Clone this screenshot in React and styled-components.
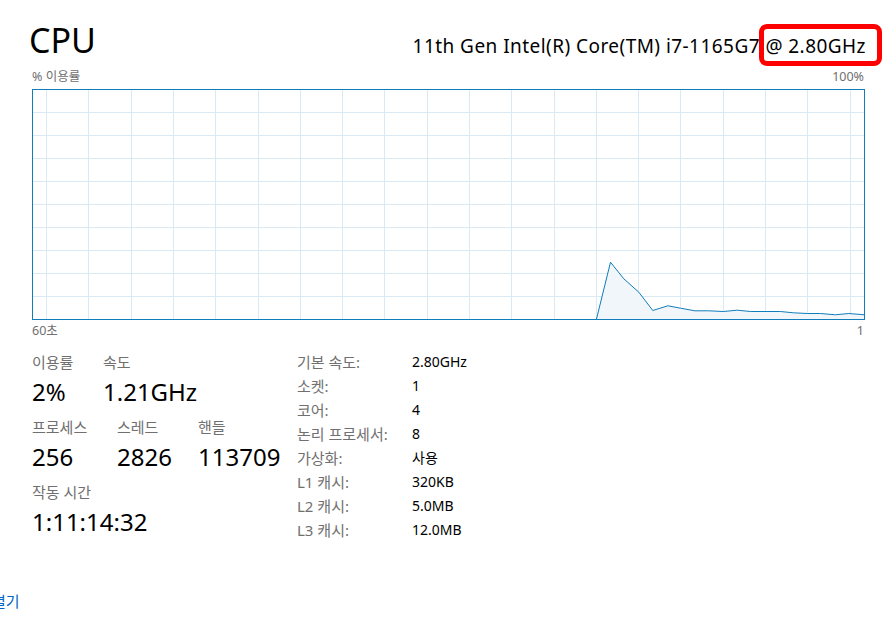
/* Libraries */
import React from 'react';
import styled, {createGlobalStyle} from 'styled-components';

const GlobalStyle = createGlobalStyle`
  html, body {
    margin: 0;
    padding: 0;
    background: #fff;
    overflow: hidden;
  }
  body {
    font-family: "Noto Sans", "Noto Sans CJK KR", sans-serif;
  }
`;

const KR = '"Noto Sans", "Noto Sans CJK KR", sans-serif';

const samples = [
  [596, 318.5], [610, 261.7], [623.3, 278.3], [638.3, 291.7], [652.3, 310],
  [667.3, 305.3], [680, 307.7], [694.3, 310.3], [708.3, 310.3], [722.7, 311],
  [736.7, 309.7], [750, 311], [780, 311], [793, 312.3], [806.7, 313],
  [820, 313], [835, 314.3], [848.3, 313], [864, 314.3],
];

const details = [
  ['기본 속도:', '2.80GHz'],
  ['소켓:', '1'],
  ['코어:', '4'],
  ['논리 프로세서:', '8'],
  ['가상화:', '사용'],
  ['L1 캐시:', '320KB'],
  ['L2 캐시:', '5.0MB'],
  ['L3 캐시:', '12.0MB'],
];

const Page = styled.div`
  /* Display & Box Model */
  position: relative;
  width: 891px;
  height: 627px;
  display: flex;
  flex-direction: column;
  box-sizing: border-box;
  padding: 0 27px 0 32px;
`;

const Header = styled.div`
  display: flex;
  align-items: flex-end;
  justify-content: space-between;
  height: 64px;
`;

const Title = styled.h1`
  margin: 0 0 0 -3px;
  font-family: ${KR};
  font-weight: 400;
  font-size: 34px;
  line-height: 40px;
  color: #000;
  padding-bottom: 4px;
`;

const CpuName = styled.div`
  position: relative;
  margin-right: -2px;
  padding-bottom: 6px;
  font-family: ${KR};
  font-size: 19px;
  letter-spacing: 0.45px;
  line-height: 24px;
  color: #000;
  white-space: nowrap;
`;

const Highlight = styled.span`
  position: absolute;
  right: -16px;
  top: -10px;
  width: 123px;
  height: 42px;
  box-sizing: border-box;
  border: 5px solid #ff0000;
  border-radius: 8px;
`;

const AxisRow = styled.div`
  display: flex;
  justify-content: space-between;
  font-family: ${KR};
  font-size: 12.5px;
  line-height: 16px;
  color: #707070;
  height: ${props => props.$h}px;
  align-items: center;
`;

const Chart = styled.svg`
  display: block;
  width: 833px;
  height: 231px;
`;

const Stats = styled.div`
  display: flex;
  margin-top: 8px;
`;

const Dynamic = styled.div`
  width: 265px;
  display: flex;
  flex-direction: column;
`;

const StatRow = styled.div`
  display: flex;
  margin-bottom: 5px;
`;

const Stat = styled.div`
  width: ${props => props.$w}px;
  display: flex;
  flex-direction: column;
`;

const Label = styled.div`
  font-family: ${KR};
  font-size: 15px;
  line-height: 24px;
  color: #707070;
`;

const Value = styled.div`
  font-family: ${KR};
  font-size: 24px;
  line-height: 36px;
  color: #000;
  white-space: nowrap;
`;

const Static = styled.div`
  display: grid;
  grid-template-columns: 115px auto;
  grid-auto-rows: 24px;
`;

const Key = styled.div`
  font-family: ${KR};
  font-size: 15px;
  line-height: 24px;
  color: #707070;
`;

const Val = styled.div`
  font-family: ${KR};
  font-size: 14px;
  line-height: 24px;
  color: #000;
`;

const Footer = styled.div`
  margin: 46px 0 0 -40px;
  font-family: ${KR};
  font-size: 15px;
  line-height: 20px;
  color: #0066cc;
`;

const Graph = () => {
  const left = 32;
  const top = 89;
  const w = 832;
  const h = 230;
  const vLines = [];
  for (let x = 14; x < w; x += 42.3) vLines.push(Math.round(x) + 0.5);
  const hLines = [];
  for (let i = 1; i < 10; i++) hLines.push(Math.round(i * 23) + 0.5);
  const pts = samples.map(([x, y]) => `${x - left + 0.5},${y - top + 0.5}`);
  const area = `${pts.join(' ')} ${w + 0.5},${h + 0.5} ${596 - left + 0.5},${h + 0.5}`;
  return (
    <Chart viewBox="0 0 833 231">
      {vLines.map(x => (
        <line key={'v' + x} x1={x} x2={x} y1={0} y2={h} stroke="#d9eaf4" strokeWidth="1" />
      ))}
      {hLines.map(y => (
        <line key={'h' + y} x1={0} x2={w} y1={y} y2={y} stroke="#d9eaf4" strokeWidth="1" />
      ))}
      <polygon points={area} fill="#f1f6fa" />
      <polyline points={pts.join(' ')} fill="none" stroke="#117dbb" strokeWidth="1" />
      <rect x="0.5" y="0.5" width={w} height={h} fill="none" stroke="#117dbb" strokeWidth="1" />
    </Chart>
  );
};

const App = () =>
  <Page>
    <GlobalStyle />
    <Header>
      <Title>CPU</Title>
      <CpuName>
        11th Gen Intel(R) Core(TM) i7-1165G7 @ 2.80GHz
        <Highlight />
      </CpuName>
    </Header>
    <AxisRow $h={25}>
      <span>% 이용률</span>
      <span>100%</span>
    </AxisRow>
    <Graph />
    <AxisRow $h={22}>
      <span>60초</span>
      <span>1</span>
    </AxisRow>
    <Stats>
      <Dynamic>
        <StatRow>
          <Stat $w={71}><Label>이용률</Label><Value>2%</Value></Stat>
          <Stat $w={100}><Label>속도</Label><Value>1.21GHz</Value></Stat>
        </StatRow>
        <StatRow>
          <Stat $w={85}><Label>프로세스</Label><Value>256</Value></Stat>
          <Stat $w={81}><Label>스레드</Label><Value>2826</Value></Stat>
          <Stat $w={90}><Label>핸들</Label><Value>113709</Value></Stat>
        </StatRow>
        <StatRow>
          <Stat $w={200}><Label>작동 시간</Label><Value>1:11:14:32</Value></Stat>
        </StatRow>
      </Dynamic>
      <Static>
        {details.map(([k, v]) => (
          <React.Fragment key={k}>
            <Key>{k}</Key>
            <Val>{v}</Val>
          </React.Fragment>
        ))}
      </Static>
    </Stats>
    <Footer>열기</Footer>
  </Page>

export default App;
